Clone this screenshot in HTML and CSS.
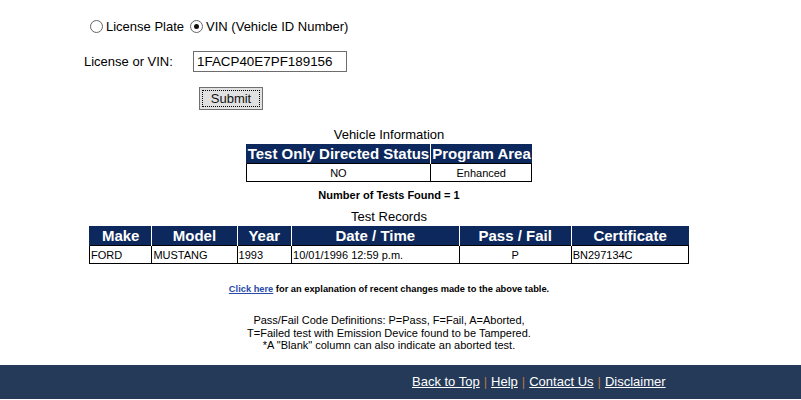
FILE: index.html
```html
<!DOCTYPE html>
<html>
<head>
<meta charset="utf-8">
<link rel="stylesheet" href="styles.css">
</head>
<body>
<div class="page">
  <form class="search">
    <div class="radios">
      <label class="radio"><span class="dot"></span>License Plate</label>
      <label class="radio"><span class="dot on"></span>VIN (Vehicle ID Number)</label>
    </div>
    <div class="field">
      <span class="label">License or VIN:</span>
      <span class="input">1FACP40E7PF189156</span>
    </div>
    <div class="actions">
      <span class="btn"><span class="btn-inner">Submit</span></span>
    </div>
  </form>

  <div class="caption">Vehicle Information</div>
  <table class="grid info">
    <tr><th class="c-dir">Test Only Directed Status</th><th class="c-area">Program Area</th></tr>
    <tr><td class="center">NO</td><td class="center">Enhanced</td></tr>
  </table>
  <div class="count">Number of Tests Found = 1</div>

  <div class="caption caption2">Test Records</div>
  <table class="grid records">
    <tr>
      <th class="w-make">Make</th><th class="w-model">Model</th><th class="w-year">Year</th>
      <th class="w-date">Date / Time</th><th class="w-pf">Pass / Fail</th><th class="w-cert">Certificate</th>
    </tr>
    <tr>
      <td>FORD</td><td>MUSTANG</td><td>1993</td><td>10/01/1996 12:59 p.m.</td><td class="center">P</td><td>BN297134C</td>
    </tr>
  </table>

  <p class="note"><a href="#">Click here</a> for an explanation of recent changes made to the above table.</p>

  <p class="defs">Pass/Fail Code Definitions: P=Pass, F=Fail, A=Aborted,<br>T=Failed test with Emission Device found to be Tampered.<br>*A "Blank" column can also indicate an aborted test.</p>
</div>
<footer class="footer">
  <nav class="links">
    <a href="#">Back to Top</a><span class="sep">|</span><a href="#">Help</a><span class="sep">|</span><a href="#">Contact Us</a><span class="sep">|</span><a href="#">Disclaimer</a>
  </nav>
</footer>
</body>
</html>
```

FILE: styles.css
```css
html, body {
  margin: 0;
  padding: 0;
  background: #fff;
  font-family: "Liberation Sans", Arial, sans-serif;
  color: #000;
}
.page {
  width: 778px;
}
.search {
  padding: 16px 0 0 84px;
  font-size: 13px;
}
.radios {
  display: flex;
  align-items: center;
  margin-left: 6px;
  height: 20px;
}
.radio {
  display: flex;
  align-items: center;
  margin-right: 6px;
}
.dot {
  width: 11px;
  height: 11px;
  border: 1px solid #666;
  border-radius: 50%;
  margin-right: 3px;
  position: relative;
  background: #fff;
}
.dot.on::after {
  content: "";
  position: absolute;
  left: 3px;
  top: 3px;
  width: 5px;
  height: 5px;
  border-radius: 50%;
  background: #111;
}
.field {
  display: flex;
  align-items: center;
  margin-top: 15px;
  height: 21px;
}
.label {
  width: 109px;
}
.input {
  box-sizing: border-box;
  width: 154px;
  height: 21px;
  border: 1px solid #6d6d6d;
  padding: 1px 3px;
  line-height: 17px;
  font-size: 13.4px;
}
.actions {
  margin: 15px 0 0 115px;
}
.btn {
  display: inline-block;
  box-sizing: border-box;
  width: 64px;
  height: 23px;
  border: 1px solid #707070;
  background: #e1e1e1;
  padding: 2px;
}
.btn-inner {
  display: block;
  height: 17px;
  border: 1px dotted #000;
  box-sizing: border-box;
  text-align: center;
  line-height: 15px;
  color: #111;
}
.caption {
  text-align: center;
  font-size: 13px;
  margin-top: 17px;
  line-height: 16px;
}
.caption2 {
  margin-top: 8px;
}
.grid {
  border-collapse: collapse;
  margin: 1px auto 0;
}
.grid th {
  background: #0d285c;
  color: #fff;
  font-size: 15px;
  font-weight: 900;
  height: 19px;
  padding: 0 1px;
  border-left: 1px solid #fff;
  line-height: 18px;
  white-space: nowrap;
}
.grid th:first-child {
  border-left: 1px solid #0d285c;
}
.grid td {
  font-size: 11px;
  height: 17px;
  border: 1px solid #000;
  padding: 0 1px;
  line-height: 16px;
}
.center {
  text-align: center;
}
.info .c-dir { width: 181px; }
.info .c-area { width: 96px; }
.count {
  text-align: center;
  font-size: 11px;
  font-weight: bold;
  margin-top: 7px;
}
.records {
  width: 600px;
}
.w-make { width: 60px; }
.w-model { width: 83px; }
.w-year { width: 52px; }
.w-date { width: 167px; }
.w-pf { width: 110px; }
.w-cert { width: 116px; }
.note {
  text-align: center;
  font-size: 9.3px;
  font-weight: bold;
  margin: 20px 0 0;
}
.note a {
  color: #2a4aa8;
}
.defs {
  text-align: center;
  font-size: 11px;
  line-height: 12.5px;
  margin: 20px 0 0;
}
.footer {
  margin-top: 13px;
  background: #243a58;
  height: 34px;
  display: flex;
  align-items: center;
  padding-left: 412px;
}
.links {
  font-size: 13px;
  color: #fff;
}
.links a {
  color: #fff;
}
.sep {
  color: #b5754d;
  margin: 0 4px;
}
```
